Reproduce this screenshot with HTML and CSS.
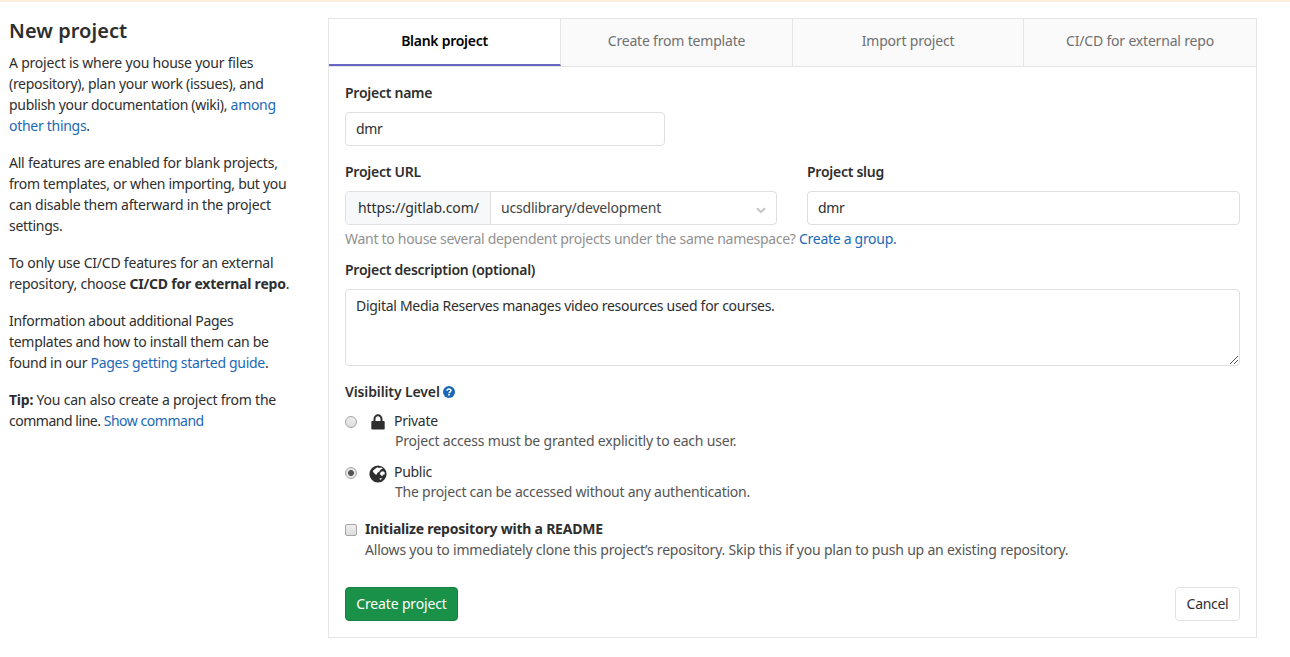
FILE: index.html
```html
<!DOCTYPE html>
<html lang="en">
<head>
<meta charset="utf-8">
<title>New project</title>
<link rel="stylesheet" href="styles.css">
</head>
<body>
<div class="notice"></div>
<div class="layout">
  <aside class="sidebar">
    <h4 class="title">New project</h4>
    <p><span class="loose">A project is where you house your files</span><br>(repository), plan your work (issues), and<br>publish your documentation (wiki), <a>among<br>other things</a>.</p>
    <p><span class="loose">All features are enabled for blank projects,</span><br>from templates, or when importing, but you<br><span class="loose">can disable them afterward in the project</span><br>settings.</p>
    <p><span class="loose">To only use CI/CD features for an external<br>repository, choose <strong>CI/CD for external repo</strong>.</span></p>
    <p>Information about additional Pages<br>templates and how to install them can be<br>found in our <a>Pages getting started guide</a>.</p>
    <p><span class="loose"><strong>Tip:</strong> You can also create a project from the</span><br><span class="tight">command line. <a>Show command</a></span></p>
  </aside>
  <main class="panel">
    <nav class="tabs">
      <a class="tab active">Blank project</a>
      <a class="tab">Create from template</a>
      <a class="tab">Import project</a>
      <a class="tab">CI/CD for external repo</a>
    </nav>
    <form class="pane">
      <label class="label">Project name</label>
      <div class="control name">dmr</div>
      <div class="columns">
        <div>
          <label class="label">Project URL</label>
          <div class="group">
            <div class="prefix">https://gitlab.com/</div>
            <div class="select">ucsdlibrary/development
              <svg class="chevron" width="10" height="7" viewBox="0 0 10 7"><path d="M1 1.2 5 5.2 9 1.2" fill="none" stroke="#c4c4c4" stroke-width="2"/></svg>
            </div>
          </div>
        </div>
        <div>
          <label class="label">Project slug</label>
          <div class="control">dmr</div>
        </div>
      </div>
      <div class="help">Want to house several dependent projects under the same namespace? <a>Create a group.</a></div>
      <label class="label">Project description (optional)</label>
      <div class="control area">Digital Media Reserves manages video resources used for courses.
        <svg class="grip" width="8" height="8" viewBox="0 0 8 8" shape-rendering="crispEdges"><path d="M0 7.5h1M1 6.5h1M2 5.5h1M3 4.5h1M4 3.5h1M5 2.5h1M6 1.5h1M7 .5h1M4 7.5h1M5 6.5h1M6 5.5h1M7 4.5h1" stroke="#555"/></svg>
      </div>
      <div class="label visibility">Visibility Level
        <svg width="12" height="12" viewBox="0 0 12 12"><circle cx="6" cy="6" r="6" fill="#1b69b6"/><path d="M4.1 4.7C4.1 2.5 7.9 2.5 7.9 4.6 7.9 5.8 6.1 5.8 6.1 7.2" fill="none" stroke="#fff" stroke-width="1.6"/><path d="M5.2 8h1.8v1.6H5.2z" fill="#fff"/></svg>
      </div>
      <div class="option">
        <i class="radio"></i>
        <svg class="icon" width="18" height="18" viewBox="0 0 18 18"><path d="M5.500 8.500V6a3.500 3.700 0 0 1 7 0v2.500" fill="none" stroke="#2e2e2e" stroke-width="2"/><rect x="2.300" y="8" width="13.400" height="8.500" rx="1" fill="#2e2e2e"/></svg>
        <div><div>Private</div><div class="desc wide">Project access must be granted explicitly to each user.</div></div>
      </div>
      <div class="option">
        <i class="radio checked"></i>
        <svg class="icon globe" width="18" height="18" viewBox="0 0 18 18"><circle cx="9" cy="9" r="8.600" fill="#2e2e2e"/><path d="M5.800 4 8.500 2.300l1.300.8 2.500-.6 1.500 1-2.300 1.200-1.300 2L8.300 8 7.500 9.800 6 9.200 4.600 7.500 3.700 6z" fill="#fff"/><path d="m12 6.800 2.200-.5 1.700 1.500-.4 1.700-1.500.2-.8 1.700-1.200-1.400-1.300-.8z" fill="#fff"/><path d="m10.300 13.800 1.700-.8.900.6-1.300 1.400z" fill="#fff"/></svg>
        <div><div>Public</div><div class="desc">The project can be accessed without any authentication.</div></div>
      </div>
      <div class="readme">
        <i class="checkbox"></i>
        <div><strong class="readme-title">Initialize repository with a README</strong><div class="desc">Allows you to immediately clone this project’s repository. Skip this if you plan to push up an existing repository.</div></div>
      </div>
      <div class="actions"><button type="button" class="btn create">Create project</button><button type="button" class="btn">Cancel</button></div>
    </form>
  </main>
</div>
</body>
</html>
```
FILE: styles.css
```css
* { box-sizing: border-box; }
body { margin: 0; height: 657px; overflow: hidden; background: #fff; color: #2e2e2e; font: 14px/21px "Noto Sans", sans-serif; letter-spacing: -0.29px; }
a { color: #1b69b6; }
.notice { height: 2px; background: #ffeedb; }
.layout { display: grid; grid-template-columns: 319px 929px; padding: 16px 0 0 9px; white-space: nowrap; }
.title { margin: 0 0 8px; font-size: 20px; line-height: 26px; font-weight: 600; letter-spacing: 0.05px; }
.sidebar p { margin: 0 0 16px; }
.loose { letter-spacing: -0.22px; }
.tight { letter-spacing: -0.47px; }
strong { font-weight: 700; }
.panel { height: 620px; border: 1px solid #e5e5e5; }
.tabs { display: grid; grid-template-columns: 232px 232px 231px 232px; height: 48px; border-bottom: 1px solid #e5e5e5; }
.tab { background: #fafafa; color: #707070; text-align: center; line-height: 20px; padding-top: 12px; border-right: 1px solid #e5e5e5; letter-spacing: -0.19px; }
.tab:last-child { border-right: 0; }
.tab.active { background: #fff; color: #000; font-weight: 600; border-bottom: 2px solid #6666c4; letter-spacing: -0.27px; }
.pane { padding: 16px; }
.label { display: block; height: 20px; line-height: 20px; margin-bottom: 9px; font-weight: 600; letter-spacing: -0.26px; }
.control { height: 34px; border: 1px solid #dfdfdf; border-radius: 4px; padding: 6px 10px; line-height: 20px; }
.name { width: 320px; margin-bottom: 16px; }
.columns { display: grid; grid-template-columns: 432px 433px; gap: 30px; }
.group { display: flex; height: 34px; border: 1px solid #e0e0e0; border-radius: 4px; line-height: 32px; overflow: hidden; }
.prefix { width: 145px; padding-left: 12px; background: #f7f8fa; border-right: 1px solid #e0e0e0; letter-spacing: -0.11px; }
.select { flex: 1; display: flex; align-items: center; justify-content: space-between; padding: 0 10px; color: #444; letter-spacing: -0.2px; }
.chevron { margin-top: 4px; }
.help { height: 20px; line-height: 20px; margin: 4px 0 11px; color: #919191; }
.area { position: relative; height: 77px; margin-bottom: 16px; }
.grip { position: absolute; right: 1px; bottom: 1px; }
.visibility { display: flex; align-items: center; gap: 3px; letter-spacing: -0.12px; }
.option { display: flex; height: 51px; line-height: 20px; }
.radio { width: 12px; height: 12px; margin: 5px 12px 0 0; border: 1px solid #a6a6a6; border-radius: 50%; background: linear-gradient(#eee, #ddd); }
.radio.checked { background: radial-gradient(circle, #555 0 2.600px, #e5e5e5 3.300px); }
.icon { margin: 2px 7px 0 0; }
.globe { margin-top: 3px; }
.desc { color: #555; padding-left: 1px; letter-spacing: -0.24px; }
.desc.wide { letter-spacing: -0.19px; }
.readme { display: flex; margin-top: 5px; height: 69px; line-height: 21px; }
.readme .desc { padding-left: 0; letter-spacing: -0.196px; }
.readme-title { display: block; letter-spacing: -0.22px; }
.checkbox { width: 12px; height: 12px; margin: 6px 8px 0 0; border: 1px solid #a6a6a6; border-radius: 2px; background: linear-gradient(#eee, #ddd); }
.actions { display: flex; justify-content: space-between; }
.btn { height: 34px; padding: 0 0 2px; width: 65px; background: #fff; border: 1px solid #e3e3e3; border-radius: 4px; color: #2e2e2e; font: inherit; letter-spacing: inherit; }
.btn.create { width: 113px; background: #1a9149; border-color: #168040; color: #fff; letter-spacing: -0.15px; }
```
